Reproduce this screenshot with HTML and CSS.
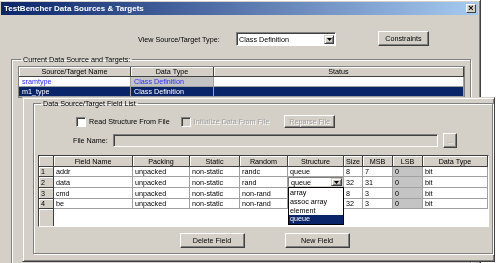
FILE: index.html
```html
<!DOCTYPE html>
<html lang="en">
<head>
    <meta charset="UTF-8">
    <title>TestBencher Data Sources &amp; Targets</title>
    <link rel="stylesheet" href="styles.css">
</head>
<body>
<div class="desk">
    <div class="window main-win">
        <div class="titlebar">
            <span class="title">TestBencher Data Sources &amp; Targets</span>
            <span class="close-btn">&#215;</span>
        </div>
        <div class="type-row">
            <span class="type-label">View Source/Target Type:</span>
            <div class="combo type-combo">
                <span class="combo-text">Class Definition</span>
                <span class="combo-arrow"><svg width="5" height="3" viewBox="0 0 5 3"><path d="M0 0H5L2.5 3Z" fill="#000"/></svg></span>
            </div>
            <button class="btn constraints-btn">Constraints</button>
        </div>
        <fieldset class="group sources-group">
            <legend>Current Data Source and Targets:</legend>
            <div class="grid-frame">
                <table class="grid sources-grid">
                    <colgroup><col style="width:112px"><col style="width:83px"><col style="width:250px"></colgroup>
                    <tr><th>Source/Target Name</th><th>Data Type</th><th>Status</th></tr>
                    <tr class="src-row"><td class="link">sramtype</td><td class="link shaded">Class Definition</td><td></td></tr>
                    <tr class="src-row selected"><td>m1_type</td><td>Class Definition</td><td></td></tr>
                </table>
            </div>
        </fieldset>
    </div>

    <div class="window field-win">
        <fieldset class="group fields-group">
            <legend>Data Source/Target Field List</legend>
            <div class="check-row">
                <label class="check"><span class="box"></span>Read Structure From File</label>
                <label class="check disabled"><span class="box"></span>Initialize Data From File</label>
                <button class="btn reparse-btn" disabled>Reparse File</button>
            </div>
            <div class="file-row">
                <span class="file-label">File Name:</span>
                <div class="file-input"></div>
                <button class="btn browse-btn" disabled>...</button>
            </div>
            <div class="grid-frame fields-frame">
                <table class="grid fields-grid">
                    <colgroup>
                        <col style="width:15px"><col style="width:79px"><col style="width:57px"><col style="width:50px"><col style="width:48px">
                        <col style="width:56px"><col style="width:19px"><col style="width:30px"><col style="width:30px"><col style="width:65px">
                    </colgroup>
                    <tr class="head"><th></th><th>Field Name</th><th>Packing</th><th>Static</th><th>Random</th><th>Structure</th><th>Size</th><th>MSB</th><th>LSB</th><th>Data Type</th></tr>
                    <tr><th class="num">1</th><td>addr</td><td>unpacked</td><td>non-static</td><td>randc</td><td>queue</td><td>8</td><td>7</td><td class="shaded">0</td><td>bit</td></tr>
                    <tr><th class="num">2</th><td>data</td><td>unpacked</td><td>non-static</td><td>rand</td>
                        <td class="edit-cell">
                            <div class="cell-combo">
                                <div class="combo grid-combo">
                                    <span class="combo-text">queue</span>
                                    <span class="combo-arrow"><svg width="5" height="3" viewBox="0 0 5 3"><path d="M0 0H5L2.5 3Z" fill="#000"/></svg></span>
                                </div>
                                <ul class="drop-list">
                                    <li>array</li>
                                    <li>assoc array</li>
                                    <li>element</li>
                                    <li class="picked">queue</li>
                                </ul>
                            </div>
                        </td>
                        <td>32</td><td>31</td><td class="shaded">0</td><td>bit</td></tr>
                    <tr><th class="num">3</th><td>cmd</td><td>unpacked</td><td>non-static</td><td>non-rand</td><td class="hidden-cell"></td><td>8</td><td>3</td><td class="shaded">0</td><td>bit</td></tr>
                    <tr><th class="num">4</th><td>be</td><td>unpacked</td><td>non-static</td><td>non-rand</td><td class="hidden-cell"></td><td>32</td><td>3</td><td class="shaded">0</td><td>bit</td></tr>
                    <tr class="filler"><th class="num"></th><td colspan="9"></td></tr>
                </table>
            </div>
            <div class="button-row">
                <button class="btn action-btn">Delete Field</button>
                <button class="btn action-btn">New Field</button>
            </div>
        </fieldset>
    </div>
</div>
</body>
</html>
```

FILE: styles.css
```css
body {
    margin: 0;
    background: #fff;
    font-family: 'Liberation Sans', Arial, sans-serif;
    font-size: 7.2px;
    color: #000;
}
.desk {
    position: relative;
    width: 503px;
    height: 263px;
    overflow: hidden;
    will-change: transform;
}
.window {
    position: absolute;
    box-sizing: border-box;
    background: #d4d0c8;
    border: 1px solid;
    border-color: #d4d0c8 #404040 #404040 #d4d0c8;
    box-shadow: inset 1px 1px #fff, inset -1px -1px #808080;
    padding: 2px;
}
.main-win {
    left: -2px;
    top: -1px;
    width: 483px;
    height: 280px;
}
.field-win {
    left: 22px;
    top: 97px;
    width: 473px;
    height: 165px;
    padding: 1px 1px 0 10px;
}

/* title bar */
.titlebar {
    display: flex;
    align-items: center;
    justify-content: space-between;
    height: 13px;
    padding: 0 2px 0 3px;
    background: linear-gradient(90deg, #0a246a, #a6caf0);
}
.title {
    color: #fff;
    font-weight: bold;
    font-size: 8px;
}
.close-btn {
    width: 10px;
    height: 9px;
    box-sizing: border-box;
    background: #d4d0c8;
    border: 1px solid;
    border-color: #fff #404040 #404040 #fff;
    font-size: 9px;
    line-height: 6px;
    text-align: center;
    font-weight: bold;
}

/* controls */
.btn {
    box-sizing: border-box;
    padding: 0;
    background: #d4d0c8;
    border: 1px solid;
    border-color: #fff #404040 #404040 #fff;
    box-shadow: inset -1px -1px #808080;
    font-family: inherit;
    font-size: 7.2px;
    color: #000;
}
.btn:disabled {
    color: #a0a0a0;
    text-shadow: 1px 1px #fff;
}
.combo {
    display: flex;
    box-sizing: border-box;
    background: #fff;
    border: 1px solid;
    border-color: #808080 #fff #fff #808080;
    box-shadow: inset 1px 1px #404040;
    padding: 2px 1px 1px 2px;
}
.combo-text {
    flex: 1;
    line-height: 9px;
}
.combo-arrow {
    display: flex;
    align-items: center;
    justify-content: center;
    width: 10px;
    box-sizing: border-box;
    background: #d4d0c8;
    border: 1px solid;
    border-color: #d4d0c8 #404040 #404040 #d4d0c8;
    box-shadow: inset 1px 1px #fff, inset -1px -1px #808080;
}

.type-row {
    display: flex;
    align-items: flex-start;
    height: 16px;
    margin-top: 16px;
    padding-left: 137px;
}
.type-label {
    width: 98px;
    margin-top: 4px;
}
.type-combo {
    width: 100px;
    height: 14px;
    margin-top: 1px;
}
.constraints-btn {
    width: 51px;
    height: 15px;
    margin-left: 42px;
}

/* group boxes */
.group {
    border: 1px solid #808080;
    box-shadow: inset 1px 1px #fff, 1px 1px #fff;
    margin: 0;
    min-width: 0;
}
.group legend {
    padding: 0 2px;
    margin-left: 3px;
    line-height: 9px;
}
.sources-group {
    margin: 8px 0 0 10px;
    width: 460px;
    height: 300px;
    box-sizing: border-box;
    padding: 2px 0 0 6px;
}
.fields-group {
    box-sizing: border-box;
    height: 155px;
    padding: 0 1px 0 4px;
}

/* grids */
.grid-frame {
    display: inline-block;
    border: 1px solid #808080;
    background: #fff;
    line-height: 0;
}
.grid {
    border-collapse: separate;
    border-spacing: 0;
    table-layout: fixed;
    line-height: 9px;
}
.grid th {
    font-weight: normal;
    padding: 0;
    background: #d4d0c8;
    border-right: 1px solid #404040;
    border-bottom: 1px solid #404040;
    box-shadow: inset 1px 1px #fff;
    white-space: nowrap;
    overflow: hidden;
}
.grid td {
    padding: 0 0 0 2px;
    border-right: 1px solid #a0a0a0;
    border-bottom: 1px solid #a0a0a0;
    white-space: nowrap;
    overflow: hidden;
}
.grid tr {
    height: 10px;
}
.sources-grid {
    width: 445px;
}
.sources-grid td {
    padding-left: 3px;
}
.src-row td.link {
    color: #2b2bff;
}
.shaded {
    background: #c4c4c4;
}
.src-row.selected td {
    background: #0a246a;
    color: #fff;
}

.fields-frame {
    margin-top: 7px;
    border-color: #404040 #fff #fff #404040;
}
.fields-grid {
    width: 449px;
}
.fields-grid tr.head {
    height: 11px;
}
.fields-grid tr {
    height: 10.4px;
}
.fields-grid th.num {
    text-align: left;
    padding-left: 2px;
}
.fields-grid tr.filler {
    height: 17px;
}
.fields-grid tr.filler td {
    border: none;
}
.fields-grid tr.filler th {
    border-bottom: none;
}

.grid td.edit-cell {
    overflow: visible;
    position: relative;
    z-index: 2;
}
.cell-combo {
    position: relative;
}
.grid-combo {
    height: 10px;
    margin-left: -2px;
    padding: 0 0 0 2px;
    border-color: #808080 #d4d0c8 #d4d0c8 #808080;
    box-shadow: none;
}
.grid-combo .combo-arrow {
    width: 11px;
}
.drop-list {
    position: absolute;
    left: -2px;
    right: -1px;
    top: 10px;
    margin: 0;
    padding: 1px 0 0;
    list-style: none;
    background: #fff;
    border: 1px solid #000;
}
.drop-list li {
    height: 8.6px;
    line-height: 8.6px;
    padding-left: 1px;
}
.drop-list li.picked {
    background: #0a246a;
    color: #fff;
}

/* check row */
.check-row {
    display: flex;
    align-items: center;
    height: 13px;
    margin-top: 7px;
    padding-left: 38px;
}
.check {
    display: flex;
    align-items: center;
    gap: 3px;
}
.check .box {
    width: 10px;
    height: 10px;
    box-sizing: border-box;
    background: #fff;
    border: 1px solid;
    border-color: #808080 #fff #fff #808080;
    box-shadow: inset 1px 1px #404040;
}
.check.disabled {
    margin-left: 11px;
    color: #a0a0a0;
    text-shadow: 1px 1px #fff;
}
.check.disabled .box {
    background: #d4d0c8;
}
.reparse-btn {
    width: 51px;
    height: 13px;
    margin-left: 15px;
}

.file-row {
    display: flex;
    align-items: center;
    height: 15px;
    margin-top: 5px;
    padding-left: 35px;
}
.file-label {
    width: 40px;
}
.file-input {
    width: 325px;
    height: 13px;
    box-sizing: border-box;
    border: 1px solid;
    border-color: #808080 #fff #fff #808080;
    box-shadow: inset 1px 1px #404040;
}
.browse-btn {
    width: 14px;
    height: 15px;
    margin-left: 5px;
    line-height: 8px;
}

.button-row {
    display: flex;
    justify-content: center;
    gap: 40px;
    margin-top: 4px;
}
.action-btn {
    width: 65px;
    height: 15px;
}
```
